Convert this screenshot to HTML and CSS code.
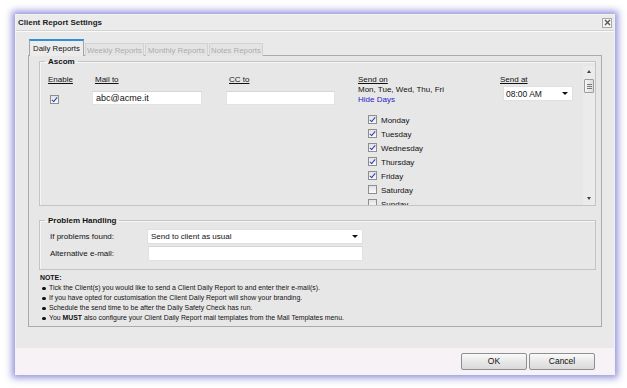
FILE: index.html
```html
<!DOCTYPE html>
<html>
<head>
<meta charset="utf-8">
<link rel="stylesheet" href="styles.css">
</head>
<body>
<div class="dialog">
  <div class="titlebar">
    <span class="title">Client Report Settings</span>
    <span class="close"><svg width="7" height="7" viewBox="0 0 7 7"><path d="M1 1L6 6M6 1L1 6" stroke="#555" stroke-width="1.3"/></svg></span>
  </div>
  <div class="body">
    <div class="tabs">
      <span class="tab active t1">Daily Reports</span>
      <span class="tab t2">Weekly Reports</span>
      <span class="tab t3">Monthly Reports</span>
      <span class="tab t4">Notes Reports</span>
    </div>
    <div class="panel">
      <fieldset class="group ascom">
        <legend>Ascom</legend>
        <div class="scroller">
          <div class="grid">
            <div class="col c-enable">
              <span class="hdr">Enable</span>
              <span class="cb checked"></span>
            </div>
            <div class="col c-mail">
              <span class="hdr">Mail to</span>
              <div class="input mail">abc@acme.it</div>
            </div>
            <div class="col c-cc">
              <span class="hdr">CC to</span>
              <div class="input mail"></div>
            </div>
            <div class="col c-on">
              <span class="hdr">Send on</span>
              <span class="line">Mon, Tue, Wed, Thu, Fri</span>
              <span class="line link">Hide Days</span>
              <ul class="daylist">
                <li><span class="cb checked"></span>Monday</li>
                <li><span class="cb checked"></span>Tuesday</li>
                <li><span class="cb checked"></span>Wednesday</li>
                <li><span class="cb checked"></span>Thursday</li>
                <li><span class="cb checked"></span>Friday</li>
                <li><span class="cb"></span>Saturday</li>
                <li><span class="cb"></span>Sunday</li>
              </ul>
            </div>
            <div class="col c-at">
              <span class="hdr">Send at</span>
              <div class="select time"><span>08:00 AM</span><span class="arrow"></span></div>
            </div>
          </div>
          <div class="scrollbar">
            <span class="sb-up"></span>
            <span class="sb-thumb"><i></i><i></i><i></i></span>
            <span class="sb-space"></span>
            <span class="sb-down"></span>
          </div>
        </div>
      </fieldset>
      <fieldset class="group problems">
        <legend>Problem Handling</legend>
        <div class="prow">
          <span class="plabel">If problems found:</span>
          <div class="select wide"><span>Send to client as usual</span><span class="arrow"></span></div>
        </div>
        <div class="prow">
          <span class="plabel">Alternative e-mail:</span>
          <div class="input wide"></div>
        </div>
      </fieldset>
      <div class="notes">
        <div class="note-title">NOTE:</div>
        <ul>
          <li>Tick the Client(s) you would like to send a Client Daily Report to and enter their e-mail(s).</li>
          <li>If you have opted for customisation the Client Daily Report will show your branding.</li>
          <li>Schedule the send time to be after the Daily Safety Check has run.</li>
          <li>You <b>MUST</b> also configure your Client Daily Report mail templates from the Mail Templates menu.</li>
        </ul>
      </div>
    </div>
  </div>
  <div class="footer">
    <button class="btn">OK</button>
    <button class="btn">Cancel</button>
  </div>
</div>
</body>
</html>
```

FILE: styles.css
```css
* { box-sizing: border-box; }
html, body { margin: 0; padding: 0; background: #ffffff; }
body {
  font-family: "Liberation Sans", Arial, sans-serif;
  font-size: 8px;
  color: #111;
  width: 627px;
  height: 388px;
  overflow: hidden;
}
.dialog {
  margin: 14px 0 0 15px;
  width: 600px;
  height: 361px;
  border: 1px solid #f2f2f2;
  background: #e9e9e9;
  box-shadow: 0 0 7px 3px rgba(105, 105, 205, 0.72);
  display: flex;
  flex-direction: column;
}
.titlebar {
  height: 16px;
  flex: none;
  display: flex;
  align-items: center;
  justify-content: space-between;
  padding: 0 2px 0 2px;
  background: #ebebeb;
  border-bottom: 1px solid #d3d3d3;
}
.title { font-weight: bold; font-size: 8px; color: #222; }
.close {
  width: 10px; height: 10px;
  border: 1px solid #a9a9a9;
  background: #f4f4f4;
  display: flex; align-items: center; justify-content: center;
}
.body {
  flex: 1;
  padding: 8px 12px 21px 12px;
  display: flex;
  flex-direction: column;
  border-top: 1px solid #fafafa;
}
.tabs {
  height: 16px;
  display: flex;
  align-items: flex-end;
  gap: 1px;
  padding-left: 1px;
  margin-bottom: -1px;
  position: relative;
  z-index: 1;
}
.tab {
  height: 13px;
  display: flex;
  align-items: center;
  justify-content: center;
  border: 1px solid #d2d2d2;
  border-bottom: none;
  background: #e4e4e4;
  color: #adadad;
  font-size: 7.8px;
}
.tab.active {
  height: 17px;
  border-color: #a4a4a4;
  border-top: 2px solid #2f8ed8;
  background: #ececec;
  color: #111;
}
.t1 { width: 55px; }
.t2 { width: 59px; }
.t3 { width: 63px; }
.t4 { width: 54px; }
.panel {
  height: 272px;
  border: 1px solid #ababab;
  background: #e7e7e7;
  padding: 0 5px 0 10px;
  display: flex;
  flex-direction: column;
}
.group {
  margin: 0;
  padding: 0;
  min-width: 0;
  border: 1px solid #c4c4c4;
  box-shadow: inset 1px 1px 0 #f6f6f6;
}
.group legend {
  margin-left: 5px;
  padding: 0 3px;
  font-weight: bold;
  font-size: 8px;
  line-height: 9px;
  color: #111;
}
.ascom { margin-top: 1px; }
.scroller {
  height: 139px;
  display: flex;
  overflow: hidden;
}
.grid {
  flex: 1;
  display: flex;
  padding: 9px 0 0 8px;
  align-items: flex-start;
}
.col { display: flex; flex-direction: column; align-items: flex-start; }
.c-enable { width: 44px; }
.c-mail { width: 134px; }
.c-cc { width: 132px; }
.c-on { width: 142px; }
.c-at { width: 82px; }
.hdr {
  height: 10px;
  line-height: 10px;
  text-decoration: underline;
  color: #111;
}
.c-mail .hdr, .c-cc .hdr { margin-left: 3px; }
.c-enable .cb { margin: 10px 0 0 2px; }
.input {
  background: #fff;
  border: 1px solid #e2e2e2;
  border-top-color: #d6d6d6;
  font-size: 9px;
  color: #111;
  display: flex;
  align-items: center;
}
.input.mail {
  width: 110px;
  height: 14px;
  margin-top: 6px;
  padding-left: 3px;
}
.c-cc .input.mail { width: 109px; }
.line { height: 10px; line-height: 10px; }
.link { color: #2424c8; }
.daylist {
  list-style: none;
  margin: 8px 0 0 10px;
  padding: 0;
}
.daylist li {
  height: 14px;
  display: flex;
  align-items: center;
  gap: 4px;
  line-height: 10px;
  padding-top: 1px;
}
.daylist .cb { margin-top: -2px; }
.cb {
  width: 9px;
  height: 9px;
  border: 1px solid #8e8e8e;
  background: linear-gradient(#e2e2e2, #fbfbfb);
  flex: none;
  position: relative;
}
.cb.checked::after {
  content: "";
  position: absolute;
  left: 2px;
  top: 0px;
  width: 2px;
  height: 5px;
  border-right: 1.3px solid #2b3fb8;
  border-bottom: 1.3px solid #2b3fb8;
  transform: rotate(40deg);
}
.select {
  background: #fff;
  border: 1px solid #e0e0e0;
  display: flex;
  align-items: center;
  justify-content: space-between;
  padding: 0 4px 0 2px;
}
.select.time {
  width: 70px;
  height: 15px;
  margin: 1px 0 0 3px;
  font-size: 8.5px;
}
.arrow {
  width: 0; height: 0;
  border-left: 3px solid transparent;
  border-right: 3px solid transparent;
  border-top: 3px solid #111;
}
.scrollbar {
  width: 12px;
  flex: none;
  display: flex;
  flex-direction: column;
  align-items: center;
  padding: 3px 0 3px 0;
  background: #ebebeb;
}
.sb-up {
  width: 0; height: 0;
  border-left: 2.5px solid transparent;
  border-right: 2.5px solid transparent;
  border-bottom: 3px solid #444;
  margin-top: 1px;
}
.sb-down {
  width: 0; height: 0;
  border-left: 2.5px solid transparent;
  border-right: 2.5px solid transparent;
  border-top: 3px solid #444;
  margin-bottom: 2px;
}
.sb-thumb {
  margin-top: 6px;
  width: 10px;
  height: 14px;
  border: 1px solid #9c9c9c;
  border-radius: 1px;
  background: linear-gradient(90deg, #f6f6f6, #dcdcdc);
  display: flex;
  flex-direction: column;
  align-items: center;
  justify-content: center;
  gap: 1px;
}
.sb-thumb i { display: block; width: 5px; height: 1px; background: #777; }
.sb-space { flex: 1; }
.problems {
  margin-top: 10px;
  padding: 4px 0 8px 10px;
}
.problems legend { margin-left: -5px; }
.prow {
  display: flex;
  align-items: center;
  height: 15px;
  margin-bottom: 2px;
}
.prow:last-child { margin-bottom: 0; }
.plabel { width: 97px; font-size: 8px; }
.select.wide {
  width: 216px;
  height: 15px;
  font-size: 8px;
  padding-left: 3px;
}
.input.wide { width: 215px; height: 15px; margin-left: 1px; }
.notes {
  margin-top: 3px;
  padding-left: 1px;
  font-size: 6.9px;
  line-height: 10px;
}
.note-title { font-weight: bold; }
.notes ul { list-style: none; margin: 0; padding: 0; }
.notes li {
  position: relative;
  padding-left: 9px;
}
.notes li::before {
  content: "";
  position: absolute;
  left: 2px;
  top: 3.5px;
  width: 3.5px;
  height: 3.5px;
  border-radius: 50%;
  background: #111;
}
.footer {
  height: 26px;
  flex: none;
  background: #f6f2f6;
  display: flex;
  justify-content: flex-end;
  align-items: center;
  gap: 2px;
  padding: 0 19px 0 0;
}
.btn {
  width: 66px;
  height: 17px;
  border: 1px solid #8f8f8f;
  border-radius: 2px;
  background: linear-gradient(#fbfbfb, #e6e6e6 55%, #dadada);
  font-family: "Liberation Sans", Arial, sans-serif;
  font-size: 8.5px;
  color: #111;
  padding: 0;
}
```
